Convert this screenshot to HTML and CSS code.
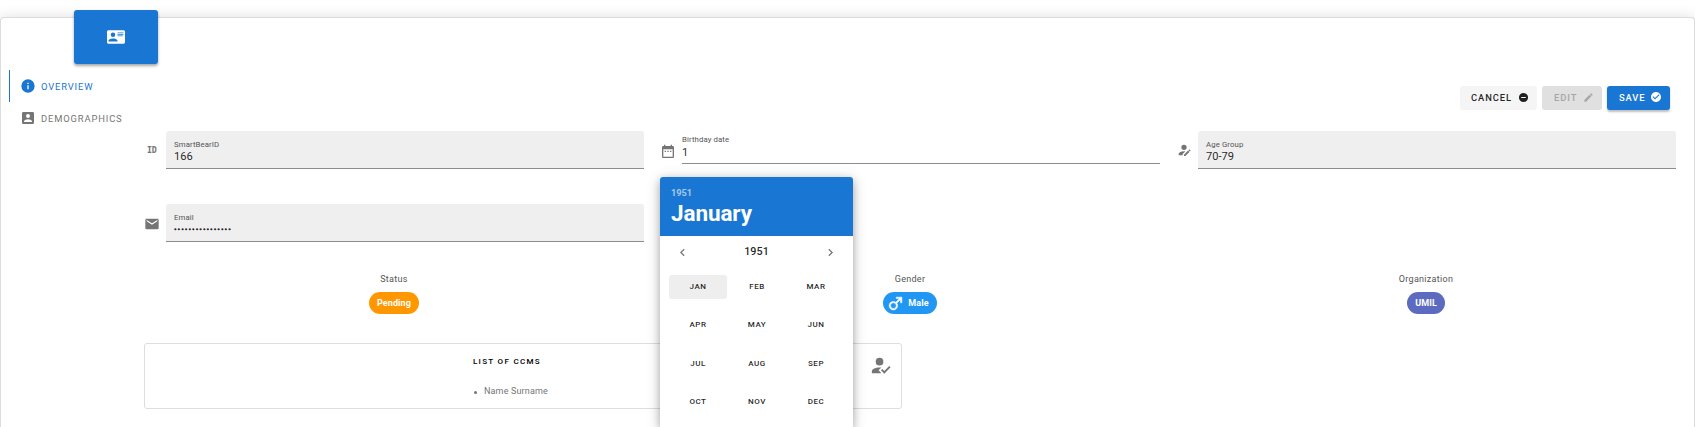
FILE: index.html
```html
<!DOCTYPE html>
<html lang="en">
<head>
<meta charset="utf-8">
<title>Overview</title>
<link rel="stylesheet" href="styles.css">
</head>
<body>
<main class="card">
  <div class="badge">
    <svg class="icon badge-icon" viewBox="0 0 24 24"><path d="M2,3H22C23.05,3 24,3.95 24,5V19C24,20.05 23.05,21 22,21H2C0.95,21 0,20.05 0,19V5C0,3.95 0.95,3 2,3M14,6V7H22V6H14M14,8V9H21.5L22,9V8H14M14,10V11H21V10H14M8,13.91C6,13.91 2,15 2,17V18H14V17C14,15 10,13.91 8,13.91M8,6A3,3 0 0,0 5,9A3,3 0 0,0 8,12A3,3 0 0,0 11,9A3,3 0 0,0 8,6Z"/></svg>
  </div>
  <div class="layout">
    <nav class="tabs">
      <a class="tab active"><svg class="icon tab-icon" viewBox="0 0 24 24"><path d="M13,9H11V7H13M13,17H11V11H13M12,2A10,10 0 0,0 2,12A10,10 0 0,0 12,22A10,10 0 0,0 22,12A10,10 0 0,0 12,2Z"/></svg><span>OVERVIEW</span></a>
      <a class="tab"><svg class="icon tab-icon" viewBox="0 0 24 24"><path d="M6,17C6,15 10,13.9 12,13.9C14,13.9 18,15 18,17V18H6M15,9A3,3 0 0,1 12,12A3,3 0 0,1 9,9A3,3 0 0,1 12,6A3,3 0 0,1 15,9M3,5V19A2,2 0 0,0 5,21H19A2,2 0 0,0 21,19V5A2,2 0 0,0 19,3H5C3.89,3 3,3.9 3,5Z"/></svg><span>DEMOGRAPHICS</span></a>
    </nav>
    <section class="content">
      <div class="actions">
        <button class="btn cancel">CANCEL<svg class="icon" viewBox="0 0 24 24"><path d="M17,13H7V11H17M12,2A10,10 0 0,0 2,12A10,10 0 0,0 12,22A10,10 0 0,0 22,12A10,10 0 0,0 12,2Z"/></svg></button>
        <button class="btn edit">EDIT<svg class="icon" viewBox="0 0 24 24"><path d="M20.71,7.04C21.1,6.65 21.1,6 20.71,5.63L18.37,3.29C18,2.9 17.35,2.9 16.96,3.29L15.12,5.12L18.87,8.87M3,17.25V21H6.75L17.81,9.93L14.06,6.18L3,17.25Z"/></svg></button>
        <button class="btn save">SAVE<svg class="icon" viewBox="0 0 24 24"><path d="M12 2C6.5 2 2 6.5 2 12S6.5 22 12 22 22 17.5 22 12 17.5 2 12 2M10 17L5 12L6.41 10.59L10 14.17L17.59 6.58L19 8L10 17Z"/></svg></button>
      </div>
      <div class="grid fields">
        <div class="field">
          <span class="prepend id-icon">ID</span>
          <div class="box filled"><span class="label">SmartBearID</span><span class="value">166</span></div>
        </div>
        <div class="field">
          <span class="prepend date"><svg class="icon field-icon" viewBox="0 0 24 24"><path d="M19,19H5V8H19M16,1V3H8V1H6V3H5C3.89,3 3,3.89 3,5V19A2,2 0 0,0 5,21H19A2,2 0 0,0 21,19V5C21,3.89 20.1,3 19,3H18V1M7,10H9V12H7V10M11,10H13V12H11V10M15,10H17V12H15V10Z"/></svg></span>
          <div class="box plain"><span class="label">Birthday date</span><span class="value">1</span></div>
          <div class="picker">
            <div class="picker-head"><span class="year">1951</span><span class="month">January</span></div>
            <div class="picker-nav">
              <svg class="icon chevron" viewBox="0 0 24 24"><path d="M15.41,16.58L10.83,12L15.41,7.41L14,6L8,12L14,18L15.41,16.58Z"/></svg>
              <span>1951</span>
              <svg class="icon chevron" viewBox="0 0 24 24"><path d="M8.59,16.58L13.17,12L8.59,7.41L10,6L16,12L10,18L8.59,16.58Z"/></svg>
            </div>
            <div class="months">
              <span class="m current">JAN</span><span class="m">FEB</span><span class="m">MAR</span>
              <span class="m">APR</span><span class="m">MAY</span><span class="m">JUN</span>
              <span class="m">JUL</span><span class="m">AUG</span><span class="m">SEP</span>
              <span class="m">OCT</span><span class="m">NOV</span><span class="m">DEC</span>
            </div>
          </div>
        </div>
        <div class="field">
          <span class="prepend"><svg class="icon field-icon" viewBox="0 0 24 24"><path d="M21.7,13.35L20.7,14.35L18.65,12.3L19.65,11.3C19.86,11.09 20.21,11.09 20.42,11.3L21.7,12.58C21.91,12.79 21.91,13.14 21.7,13.35M12,18.94L18.06,12.88L20.11,14.93L14.06,21H12V18.94M12,14C7.58,14 4,15.79 4,18V20H10V18.11L14,14.11C13.34,14.03 12.67,14 12,14M12,4A4,4 0 0,0 8,8A4,4 0 0,0 12,12A4,4 0 0,0 16,8A4,4 0 0,0 12,4Z"/></svg></span>
          <div class="box filled"><span class="label">Age Group</span><span class="value">70-79</span></div>
        </div>
        <div class="field">
          <span class="prepend mail"><svg class="icon field-icon" viewBox="0 0 24 24"><path d="M20,8L12,13L4,8V6L12,11L20,6M20,4H4C2.89,4 2,4.89 2,6V18A2,2 0 0,0 4,20H20A2,2 0 0,0 22,18V6C22,4.89 21.1,4 20,4Z"/></svg></span>
          <div class="box filled"><span class="label">Email</span><span class="value dots">••••••••••••••••</span></div>
        </div>
      </div>
      <div class="grid stats">
        <div class="stat"><span>Status</span><span class="chip pending">Pending</span></div>
        <div class="stat"><span>Gender</span><span class="chip male"><svg class="icon male-icon" viewBox="0 0 24 24"><path d="M9,9C10.29,9 11.5,9.41 12.47,10.11L17.58,5H13V3H21V11H19V6.41L13.89,11.5C14.59,12.5 15,13.7 15,15A6,6 0 0,1 9,21A6,6 0 0,1 3,15A6,6 0 0,1 9,9M9,11A4,4 0 0,0 5,15A4,4 0 0,0 9,19A4,4 0 0,0 13,15A4,4 0 0,0 9,11Z"/></svg>Male</span></div>
        <div class="stat"><span>Organization</span><span class="chip org">UMIL</span></div>
      </div>
      <div class="ccm">
        <div class="ccm-body">
          <div class="ccm-title">LIST OF CCMS</div>
          <div class="ccm-item"><i class="bullet"></i>Name Surname</div>
        </div>
        <svg class="icon ccm-icon" viewBox="0 0 24 24"><path d="M21.1,12.5L22.5,13.91L15.97,20.5L12.5,17L13.9,15.59L15.97,17.67L21.1,12.5M10,17L13,20H3V18C3,15.79 6.58,14 11,14L12.89,14.11L10,17M11,4A4,4 0 0,1 15,8A4,4 0 0,1 11,12A4,4 0 0,1 7,8A4,4 0 0,1 11,4Z"/></svg>
      </div>
    </section>
  </div>
</main>
</body>
</html>
```

FILE: styles.css
```css
* { box-sizing: border-box; }
html, body { height: 100%; }
body {
  margin: 0;
  padding-top: 17px;
  overflow: hidden;
  background: #fff;
  font-family: Roboto, "Liberation Sans", sans-serif;
  font-size: 10px;
  color: rgba(0, 0, 0, .87);
}
.icon { display: block; fill: currentColor; flex: none; }
.card {
  height: 410px;
  border: 1px solid #dcdcdc;
  border-bottom: 0;
  border-radius: 4px 4px 0 0;
  background: #fff;
  box-shadow: 0 0 14px rgba(0, 0, 0, .13);
}
.badge {
  width: 84px;
  height: 54px;
  margin: -8px 0 0 73px;
  display: flex;
  align-items: center;
  justify-content: center;
  border-radius: 3px;
  background: #1976d2;
  color: #fff;
  box-shadow: 0 2px 3px rgba(0, 0, 0, .35);
}
.badge-icon { width: 18px; height: 18px; }
.layout { display: flex; padding-top: 6px; }
.tabs { width: 127px; flex: none; padding-left: 8px; }
.tab {
  height: 32px;
  display: flex;
  align-items: center;
  gap: 5px;
  padding-left: 10px;
  border-left: 1px solid transparent;
  color: #757575;
  font-size: 9.4px;
  letter-spacing: .86px;
  line-height: 12px;
}
.tab span { padding-top: 1px; }
.tab-icon { width: 16px; height: 16px; }
.tab.active { border-color: #1976d2; color: #1976d2; }
.content { width: 1548px; margin-left: 8px; padding-top: 16px; }
.actions { display: flex; justify-content: flex-end; gap: 5px; padding-right: 14px; }
.btn {
  height: 24px;
  display: flex;
  align-items: center;
  justify-content: space-between;
  padding: 0 8px 0 11px;
  border: 0;
  border-radius: 3px;
  font: 500 9.4px/12px Roboto, sans-serif;
  letter-spacing: .9px;
}
.btn .icon { width: 11px; height: 11px; margin-top: -2px; }
.cancel { width: 77px; background: #f5f5f5; color: rgba(0, 0, 0, .87); }
.edit { width: 60px; padding-left: 12px; background: #e0e0e0; color: #a6a6a6; }
.save { width: 63px; padding-left: 12px; background: #1976d2; color: #fff; box-shadow: 0 2px 2px rgba(0, 0, 0, .25); }
.btn.save .icon { width: 12px; height: 12px; }
.grid { display: grid; grid-template-columns: repeat(3, 516px); }
.fields { padding-top: 21px; grid-template-rows: 73px 69px; }
.field { position: relative; display: flex; align-items: flex-start; padding: 0 8px; }
.prepend { width: 22px; height: 38px; display: flex; align-items: center; color: #757575; }
.date { height: 41px; }
.mail { height: 40px; }
.field-icon { width: 16px; height: 16px; }
.id-icon { padding-left: 3px; font: bold 8.4px/10px "DejaVu Sans Mono", monospace; letter-spacing: -.4px; }
.box { flex: 1; height: 38px; display: flex; flex-direction: column; border-bottom: 1px solid #8c8c8c; }
.filled { padding: 9px 8px 0; border-radius: 3px 3px 0 0; background: #efefef; }
.plain { height: 33px; padding-top: 4px; }
.label { font-size: 7.8px; line-height: 9px; letter-spacing: .1px; color: #555; }
.plain .value { padding-top: 2px; }
.value { padding-top: 1px; font-size: 11.1px; line-height: 14px; }
.dots { padding-top: 1px; font-size: 7.8px; letter-spacing: .98px; -webkit-text-stroke: .5px currentColor; }
.picker {
  position: absolute;
  left: 8px;
  top: 46px;
  z-index: 2;
  width: 193px;
  height: 250px;
  border-radius: 3px 3px 0 0;
  background: #fff;
  box-shadow: 0 3px 8px rgba(0, 0, 0, .28), 0 2px 16px rgba(0, 0, 0, .14);
}
.picker-head {
  height: 59px;
  padding: 9px 11px 0;
  display: flex;
  flex-direction: column;
  border-radius: 3px 3px 0 0;
  background: #1976d2;
  color: #fff;
}
.year { font-size: 9.2px; line-height: 13px; font-weight: 700; opacity: .6; }
.month { font-size: 22.5px; line-height: 29px; font-weight: 700; letter-spacing: -.1px; }
.picker-nav {
  height: 31px;
  display: flex;
  align-items: center;
  justify-content: space-between;
  padding: 0 15px;
  font-size: 10.8px;
  font-weight: 500;
}
.chevron { width: 15px; height: 15px; margin-top: 1px; color: #757575; }
.months { display: grid; grid-template-columns: repeat(3, 59px); grid-auto-rows: 38.3px; padding: 1px 7px 0 9px; align-items: center; }
.m { height: 24px; margin-right: 1px; text-align: center; font-size: 8px; line-height: 24px; font-weight: 500; letter-spacing: .5px; border-radius: 3px; }
.current { background: #eee; }
.stat { display: flex; flex-direction: column; align-items: center; font-size: 9px; line-height: 12px; letter-spacing: .3px; color: #555; }
.chip {
  height: 22px;
  margin-top: 7px;
  display: flex;
  align-items: center;
  padding: 0 8px;
  border-radius: 11px;
  color: #fff;
  font-weight: 700;
  letter-spacing: .1px;
}
.pending { background: #ff9800; }
.male { background: #2196f3; padding-left: 4px; gap: 4px; }
.male-icon { width: 17px; height: 17px; stroke: currentColor; stroke-width: .7; }
.org { background: #5c6bc0; }
.ccm {
  width: 758px;
  height: 66px;
  margin: 29px 0 0 8px;
  padding: 10px 9px 0 328px;
  display: flex;
  justify-content: space-between;
  border: 1px solid #dedede;
  border-radius: 3px;
}
.ccm-title { padding-top: 2px; font-size: 8px; line-height: 12px; font-weight: 500; letter-spacing: 1.3px; color: #000; }
.ccm-item { display: flex; align-items: center; margin-top: 17px; font-size: 9px; line-height: 12px; letter-spacing: .15px; color: #757575; }
.bullet { width: 3px; height: 3px; margin: 2px 7px 0 1px; border-radius: 50%; background: #757575; }
.ccm-icon { width: 23px; height: 23px; color: #757575; }
```
